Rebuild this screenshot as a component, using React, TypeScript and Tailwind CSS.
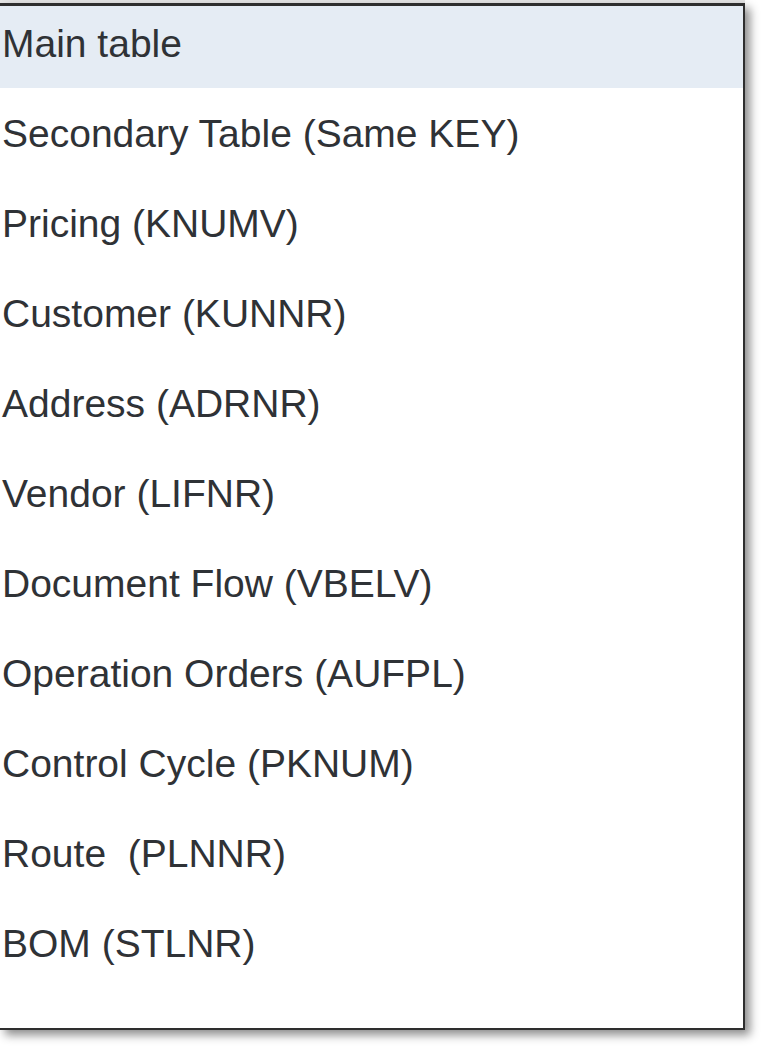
import React from 'react';

const items = [
  'Secondary Table (Same KEY)',
  'Pricing (KNUMV)',
  'Customer (KUNNR)',
  'Address (ADRNR)',
  'Vendor (LIFNR)',
  'Document Flow (VBELV)',
  'Operation Orders (AUFPL)',
  'Control Cycle (PKNUM)',
  'Route  (PLNNR)',
  'BOM (STLNR)',
];

export default function App() {
  return (
    <div className="min-h-screen w-[763px] bg-white" style={{ fontFamily: '"Liberation Sans", Arial, sans-serif' }}>
      {/* top strip from the cropped screenshot */}
      <div className="h-[3px] w-[745px] bg-[#e4e4e4]" />
      <div className="w-[745px] border-t-[3px] border-r-[2px] border-b-[2px] border-[#2e2e2e] bg-white shadow-[5px_5px_9px_rgba(0,0,0,0.45)]">
        <div className="flex h-[82px] items-center bg-[#e5ecf4] pb-[5px] pl-[2px] text-[39px] text-[#2f3236]">
          Main table
        </div>
        {items.map((label) => (
          <div
            key={label}
            className="flex h-[90px] items-center whitespace-pre pt-[2px] pl-[2px] text-[39px] text-[#2f3236]"
          >
            {label}
          </div>
        ))}
        <div className="h-[40px]" />
      </div>
    </div>
  );
}
